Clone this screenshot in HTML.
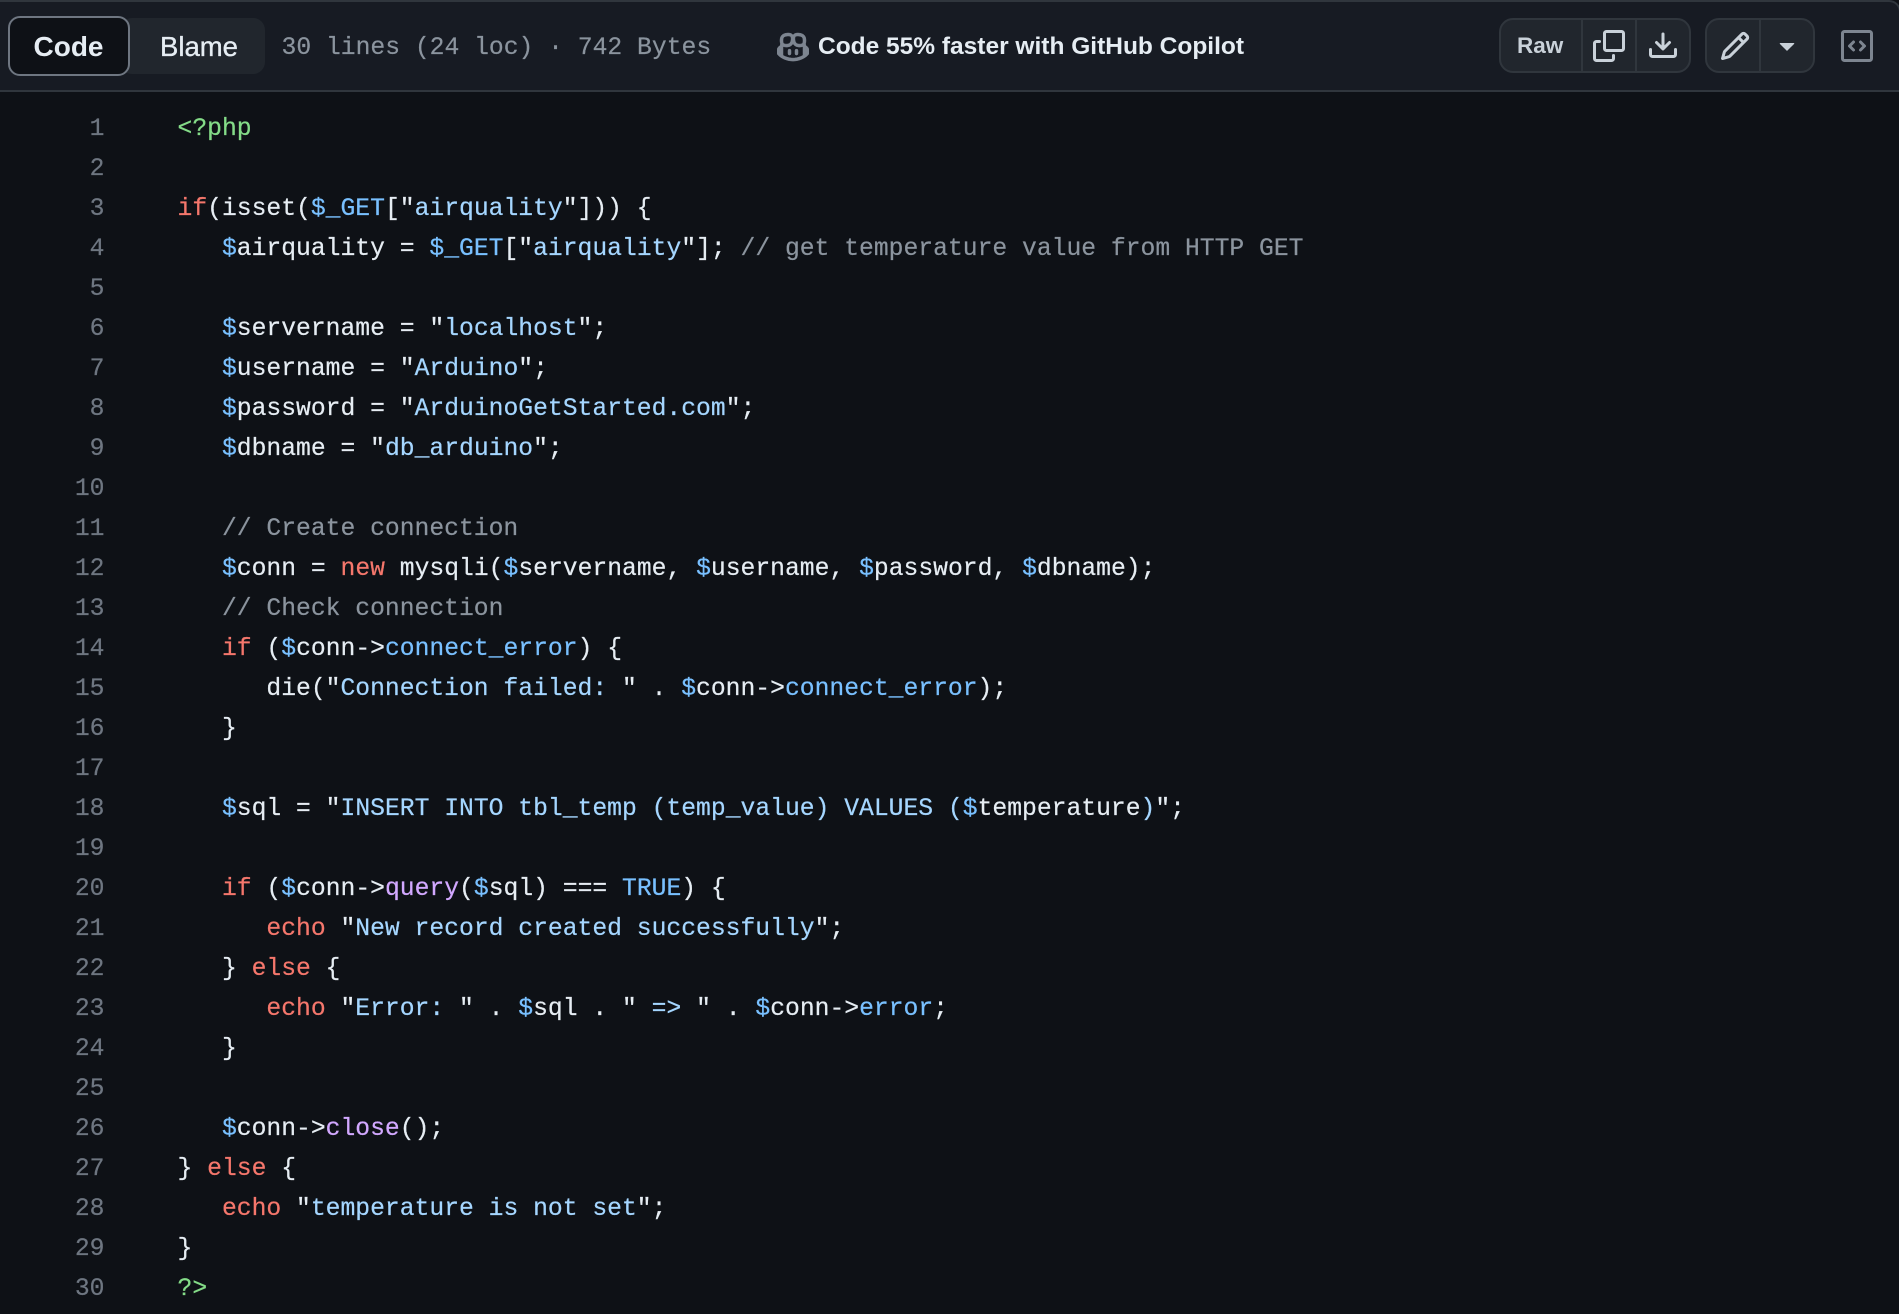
<!DOCTYPE html>
<html>
<head>
<meta charset="utf-8">
<style>
html,body{margin:0;padding:0;width:1899px;height:1314px;overflow:hidden;background:#0e1116}
*{box-sizing:border-box}
.abs,svg{position:absolute}
#hdr{position:absolute;left:-4px;top:0;width:1905px;height:92px;background:#171b23;border-top:2px solid #30363d;border-right:2px solid #30363d;border-bottom:2px solid #30363d;border-top-right-radius:12px}
.sans{font-family:"Liberation Sans",sans-serif;white-space:nowrap}
.mono{font-family:"Liberation Mono",monospace;white-space:pre;font-size:24.69px;-webkit-text-stroke:.2px currentColor}
#blame{position:absolute;left:120px;top:18px;width:145px;height:56px;background:#21262d;border-radius:12px}
#code{position:absolute;left:8px;top:16px;width:122px;height:60px;background:#0e1116;border:2px solid #6e7681;border-radius:12px}
.grp{position:absolute;top:18px;height:55px;background:#21262d;border:2px solid #30363d;border-radius:14px}
.div{position:absolute;top:18px;width:2px;height:55px;background:#30363d}
#nums{position:absolute;left:0;top:109px;width:104.5px;text-align:right;line-height:40px;color:#6e7681}
#src{position:absolute;left:177.5px;top:109px;margin:0;line-height:40px;color:#e6edf3}
.k{color:#f5776c}.v{color:#79c0ff}.s{color:#a5d6ff}.c{color:#8b949e}.g{color:#84dc88}.f{color:#d2a8ff}
</style>
</head>
<body>
<div id="hdr"></div>
<div id="blame"></div>
<div id="code"></div>
<div class="abs sans" style="left:33.5px;top:31px;font-size:28px;line-height:32px;font-weight:700;color:#e6edf3">Code</div>
<div class="abs sans" style="left:160px;top:31px;font-size:27.5px;line-height:32px;color:#e6edf3;-webkit-text-stroke:.35px #e6edf3">Blame</div>
<div class="abs mono" style="left:281.5px;top:28px;line-height:40px;color:#8b949e">30 lines (24 loc) · 742 Bytes</div>

<svg style="left:777px;top:31px" width="32" height="32" viewBox="0 0 16 16" fill="#7d8590" stroke="#7d8590" stroke-width=".25"><path d="M7.998 15.035c-4.562 0-7.873-2.914-7.998-3.749V9.338c.085-.628.677-1.686 1.588-2.065.013-.07.024-.143.036-.218.029-.183.06-.384.126-.612-.201-.508-.254-1.084-.254-1.656 0-.87.128-1.769.693-2.484.579-.733 1.494-1.124 2.724-1.261 1.206-.134 2.262.034 2.944.765.05.053.096.108.139.165.044-.057.094-.112.143-.165.682-.731 1.738-.899 2.944-.765 1.23.137 2.145.528 2.724 1.261.566.715.693 1.614.693 2.484 0 .572-.053 1.148-.254 1.656.066.228.098.429.126.612.012.076.024.148.037.218.924.385 1.522 1.471 1.591 2.095v1.872c0 .766-3.351 3.795-8.002 3.795Zm0-1.485c2.28 0 4.584-1.11 5.002-1.433V7.862l-.023-.116c-.49.21-1.075.291-1.727.291-1.146 0-2.059-.327-2.71-.991A3.222 3.222 0 0 1 8 6.303a3.24 3.24 0 0 1-.544.743c-.65.664-1.563.991-2.71.991-.652 0-1.236-.081-1.727-.291l-.023.116v4.255c.419.323 2.722 1.433 5.002 1.433ZM6.762 2.83c-.193-.206-.637-.413-1.682-.297-1.019.113-1.479.404-1.713.7-.247.312-.369.789-.369 1.554 0 .793.129 1.171.308 1.371.162.181.519.379 1.442.379.853 0 1.339-.235 1.638-.54.315-.322.527-.827.617-1.553.117-.935-.037-1.395-.241-1.614Zm4.155-.297c-1.044-.116-1.488.091-1.681.297-.204.219-.359.679-.242 1.614.091.726.303 1.231.618 1.553.299.305.784.54 1.638.54.922 0 1.28-.198 1.442-.379.179-.2.308-.578.308-1.371 0-.765-.123-1.242-.37-1.554-.233-.296-.693-.587-1.713-.7Z"/><path d="M6.25 9.037a.75.75 0 0 1 .75.75v1.501a.75.75 0 0 1-1.5 0V9.787a.75.75 0 0 1 .75-.75Zm4.25.75v1.501a.75.75 0 0 1-1.5 0V9.787a.75.75 0 0 1 1.5 0Z"/></svg>
<div class="abs sans" style="left:818px;top:31px;font-size:24.5px;line-height:32px;font-weight:700;color:#e6edf3">Code 55% faster with GitHub Copilot</div>

<div class="grp" style="left:1499px;width:192px"></div>
<div class="div" style="left:1581px"></div>
<div class="div" style="left:1635px"></div>
<div class="abs sans" style="left:1517px;top:30px;font-size:22.5px;line-height:32px;font-weight:700;color:#c9d1d9">Raw</div>
<svg style="left:1593px;top:30px" width="32" height="32" viewBox="0 0 16 16" fill="#c9d1d9"><path d="M0 6.75C0 5.784.784 5 1.75 5h1.5a.75.75 0 0 1 0 1.5h-1.5a.25.25 0 0 0-.25.25v7.5c0 .138.112.25.25.25h7.5a.25.25 0 0 0 .25-.25v-1.5a.75.75 0 0 1 1.5 0v1.5A1.75 1.75 0 0 1 9.25 16h-7.5A1.75 1.75 0 0 1 0 14.25Z"/><path d="M5 1.75C5 .784 5.784 0 6.75 0h7.5C15.216 0 16 .784 16 1.75v7.5A1.75 1.75 0 0 1 14.25 11h-7.5A1.75 1.75 0 0 1 5 9.25Zm1.75-.25a.25.25 0 0 0-.25.25v7.5c0 .138.112.25.25.25h7.5a.25.25 0 0 0 .25-.25v-7.5a.25.25 0 0 0-.25-.25Z"/></svg>
<svg style="left:1647px;top:30px" width="32" height="32" viewBox="0 0 16 16" fill="#c9d1d9"><path d="M2.75 14A1.75 1.75 0 0 1 1 12.25v-2.5a.75.75 0 0 1 1.5 0v2.5c0 .138.112.25.25.25h10.5a.25.25 0 0 0 .25-.25v-2.5a.75.75 0 0 1 1.5 0v2.5A1.75 1.75 0 0 1 13.25 14Z"/><path d="M7.25 7.689V2a.75.75 0 0 1 1.5 0v5.689l1.97-1.969a.749.749 0 1 1 1.06 1.06l-3.25 3.25a.749.749 0 0 1-1.06 0L4.22 6.78a.749.749 0 1 1 1.06-1.06l1.97 1.969Z"/></svg>

<div class="grp" style="left:1705px;width:110px"></div>
<div class="div" style="left:1759px"></div>
<svg style="left:1719px;top:30px" width="32" height="32" viewBox="0 0 16 16" fill="#c9d1d9"><path d="M11.013 1.427a1.75 1.75 0 0 1 2.474 0l1.086 1.086a1.75 1.75 0 0 1 0 2.474l-8.61 8.61c-.21.21-.47.364-.756.445l-3.251.93a.75.75 0 0 1-.927-.928l.929-3.25c.081-.286.235-.547.445-.758l8.61-8.61Zm.176 4.823L9.75 4.81l-6.286 6.287a.253.253 0 0 0-.064.108l-.558 1.953 1.953-.558a.253.253 0 0 0 .108-.064Zm1.238-3.763a.25.25 0 0 0-.354 0L10.811 3.75l1.439 1.44 1.263-1.263a.25.25 0 0 0 0-.354Z"/></svg>
<svg style="left:1770.5px;top:29px" width="32" height="32" viewBox="0 0 16 16" fill="#c9d1d9"><path d="m4.427 7.427 3.396 3.396a.25.25 0 0 0 .354 0l3.396-3.396A.25.25 0 0 0 11.396 7H4.604a.25.25 0 0 0-.177.427Z"/></svg>
<svg style="left:1841px;top:30px" width="32" height="32" viewBox="0 0 16 16" fill="#7d8590"><path d="M0 1.75C0 .784.784 0 1.75 0h12.5C15.216 0 16 .784 16 1.75v12.5A1.75 1.75 0 0 1 14.25 16H1.75A1.75 1.75 0 0 1 0 14.25Zm1.75-.25a.25.25 0 0 0-.25.25v12.5c0 .138.112.25.25.25h12.5a.25.25 0 0 0 .25-.25V1.75a.25.25 0 0 0-.25-.25Zm7.47 3.97a.75.75 0 0 1 1.06 0l2 2a.75.75 0 0 1 0 1.06l-2 2a.749.749 0 1 1-1.06-1.06L10.69 8 9.22 6.53a.75.75 0 0 1 0-1.06ZM6.78 6.53 5.31 8l1.47 1.47a.749.749 0 1 1-1.06 1.06l-2-2a.75.75 0 0 1 0-1.06l2-2a.751.751 0 0 1 1.06 0 .75.75 0 0 1 0 1.06Z"/></svg>

<pre id="nums" class="mono" style="margin:0">1
2
3
4
5
6
7
8
9
10
11
12
13
14
15
16
17
18
19
20
21
22
23
24
25
26
27
28
29
30</pre>
<pre id="src" class="mono"><span class="g">&lt;?php</span>

<span class="k">if</span>(isset(<span class="v">$_GET</span>["<span class="s">airquality</span>"])) {
   <span class="v">$</span>airquality = <span class="v">$_GET</span>["<span class="s">airquality</span>"]; <span class="c">// get temperature value from HTTP GET</span>

   <span class="v">$</span>servername = "<span class="s">localhost</span>";
   <span class="v">$</span>username = "<span class="s">Arduino</span>";
   <span class="v">$</span>password = "<span class="s">ArduinoGetStarted.com</span>";
   <span class="v">$</span>dbname = "<span class="s">db_arduino</span>";

   <span class="c">// Create connection</span>
   <span class="v">$</span>conn = <span class="k">new</span> mysqli(<span class="v">$</span>servername, <span class="v">$</span>username, <span class="v">$</span>password, <span class="v">$</span>dbname);
   <span class="c">// Check connection</span>
   <span class="k">if</span> (<span class="v">$</span>conn-&gt;<span class="v">connect_error</span>) {
      die("<span class="s">Connection failed: </span>" . <span class="v">$</span>conn-&gt;<span class="v">connect_error</span>);
   }

   <span class="v">$</span>sql = "<span class="s">INSERT INTO tbl_temp (temp_value) VALUES (</span><span class="v">$</span>temperature<span class="s">)</span>";

   <span class="k">if</span> (<span class="v">$</span>conn-&gt;<span class="f">query</span>(<span class="v">$</span>sql) === <span class="v">TRUE</span>) {
      <span class="k">echo</span> "<span class="s">New record created successfully</span>";
   } <span class="k">else</span> {
      <span class="k">echo</span> "<span class="s">Error: </span>" . <span class="v">$</span>sql . " <span class="s">=&gt;</span> " . <span class="v">$</span>conn-&gt;<span class="v">error</span>;
   }

   <span class="v">$</span>conn-&gt;<span class="f">close</span>();
} <span class="k">else</span> {
   <span class="k">echo</span> "<span class="s">temperature is not set</span>";
}
<span class="g">?&gt;</span></pre>
</body>
</html>
